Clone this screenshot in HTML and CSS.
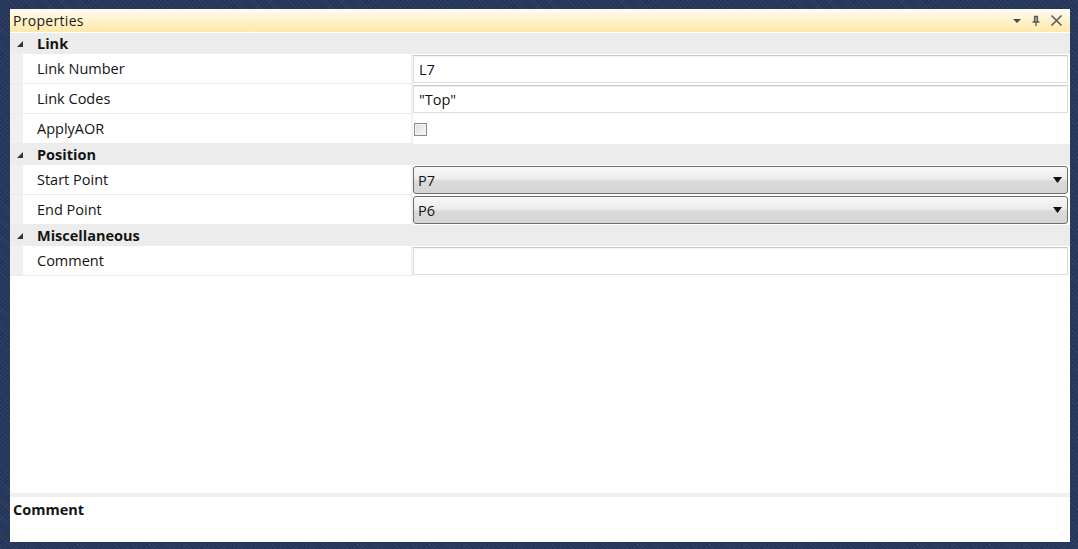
FILE: index.html
```html
<!DOCTYPE html>
<html>
<head>
<meta charset="utf-8">
<link rel="stylesheet" href="styles.css">
</head>
<body>
<div class="panel">
  <div class="titlebar">
    <span class="title">Properties</span>
    <div class="tools">
      <svg width="10" height="10" viewBox="0 0 10 10"><path d="M1 3 H9 L5 7 Z" fill="#4b4b4b"/></svg>
      <svg width="10" height="12" viewBox="0 0 10 12"><path d="M3 1.5 H7 M3.5 1.5 V7 M6.5 1.5 V7 M1.5 7 H8.5 M5 7 V11" stroke="#5a5a5a" stroke-width="1.3" fill="none"/><path d="M5 1.5 V7" stroke="#5a5a5a" stroke-width="1"/></svg>
      <svg width="13" height="13" viewBox="0 0 13 13"><path d="M1.5 1.5 L11.5 11.5 M11.5 1.5 L1.5 11.5" stroke="#5a5a5a" stroke-width="1.6"/></svg>
    </div>
  </div>
  <div class="grid">
    <div class="cat"><span class="tri"></span><span class="cat-name">Link</span></div>
    <div class="row">
      <div class="label">Link Number</div>
      <div class="value"><div class="textbox">L7</div></div>
    </div>
    <div class="row">
      <div class="label">Link Codes</div>
      <div class="value"><div class="textbox">"Top"</div></div>
    </div>
    <div class="row">
      <div class="label">ApplyAOR</div>
      <div class="value"><span class="checkbox"></span></div>
    </div>
    <div class="cat"><span class="tri"></span><span class="cat-name">Position</span></div>
    <div class="row">
      <div class="label">Start Point</div>
      <div class="value"><div class="combo"><span>P7</span><svg width="9" height="6" viewBox="0 0 9 6"><path d="M0 0 H9 L4.5 6 Z" fill="#111"/></svg></div></div>
    </div>
    <div class="row">
      <div class="label">End Point</div>
      <div class="value"><div class="combo"><span>P6</span><svg width="9" height="6" viewBox="0 0 9 6"><path d="M0 0 H9 L4.5 6 Z" fill="#111"/></svg></div></div>
    </div>
    <div class="cat"><span class="tri"></span><span class="cat-name">Miscellaneous</span></div>
    <div class="row">
      <div class="label">Comment</div>
      <div class="value"><div class="textbox empty"></div></div>
    </div>
    <div class="filler"></div>
  </div>
  <div class="desc">
    <div class="desc-title">Comment</div>
  </div>
</div>
</body>
</html>
```

FILE: styles.css
```css
html, body {
  margin: 0;
  padding: 0;
  height: 100%;
}
body {
  background-color: #24365a;
  background-image: repeating-linear-gradient(45deg, rgba(255,255,255,0.05) 0 1px, transparent 1px 3px);
  font-family: "Open Sans", "Noto Sans", sans-serif;
  color: #141414;
  padding: 9px 8px 7px 10px;
  box-sizing: border-box;
}
.panel {
  height: 533px;
  background: #fff;
  display: flex;
  flex-direction: column;
  overflow: hidden;
}
.titlebar {
  height: 23px;
  flex: none;
  background: linear-gradient(#fffcf2, #ffe9a8);
  display: flex;
  align-items: center;
  justify-content: space-between;
  padding: 0 7px 0 3px;
  box-sizing: border-box;
}
.title {
  font-size: 14px;
  color: #1b1b1b;
  letter-spacing: 0.3px;
}
.tools {
  display: flex;
  align-items: center;
  gap: 9px;
}
.grid {
  flex: 1;
  display: flex;
  flex-direction: column;
  padding-top: 1px;
}
.cat {
  height: 21px;
  background: #ececec;
  display: flex;
  align-items: center;
  font-weight: 700;
  font-size: 14.5px;
  flex: none;
}
.tri {
  width: 0;
  height: 0;
  border-left: 6px solid transparent;
  border-bottom: 6px solid #333;
  margin: 0 14px 0 7px;
}
.row {
  height: 30px;
  display: flex;
  flex: none;
  background: linear-gradient(90deg, #f0f0f0 0 13px, transparent 13px);
}
.label {
  width: 403px;
  flex: none;
  box-sizing: border-box;
  padding-left: 27px;
  font-size: 14.5px;
  display: flex;
  align-items: center;
  border-bottom: 1px solid #ebebeb;
  border-right: 2px solid #f2f2f2;
}
.value {
  flex: 1;
  display: flex;
  align-items: center;
  padding-right: 2px;
}
.textbox {
  flex: 1;
  height: 28px;
  box-sizing: border-box;
  border: 1px solid #dcdcdc;
  border-top-color: #c8c8c8;
  box-shadow: inset 0 1px 1px rgba(0,0,0,0.06);
  font-size: 14.5px;
  display: flex;
  align-items: center;
  padding-left: 5px;
  background: #fff;
}
.checkbox {
  width: 11px;
  height: 11px;
  border: 1px solid #8a8a8a;
  background: linear-gradient(135deg, #dcdcdc, #fafafa);
  box-shadow: inset 0 0 0 1px #f4f4f4;
  margin-left: 1px;
}
.combo {
  flex: 1;
  height: 28px;
  box-sizing: border-box;
  border: 1px solid #6e6e6e;
  border-radius: 3px;
  background: linear-gradient(#f8f8f8 0%, #ececec 45%, #dadada 55%, #d4d4d4 100%);
  display: flex;
  align-items: center;
  justify-content: space-between;
  padding: 0 5px 0 4px;
  font-size: 14.5px;
}
.filler {
  flex: 1;
  background: #fff;
}
.desc {
  height: 49px;
  box-sizing: border-box;
  flex: none;
  border-top: 4px solid #efefef;
  padding: 3px 3px;
}
.desc-title {
  font-weight: 700;
  font-size: 14.5px;
}
```
